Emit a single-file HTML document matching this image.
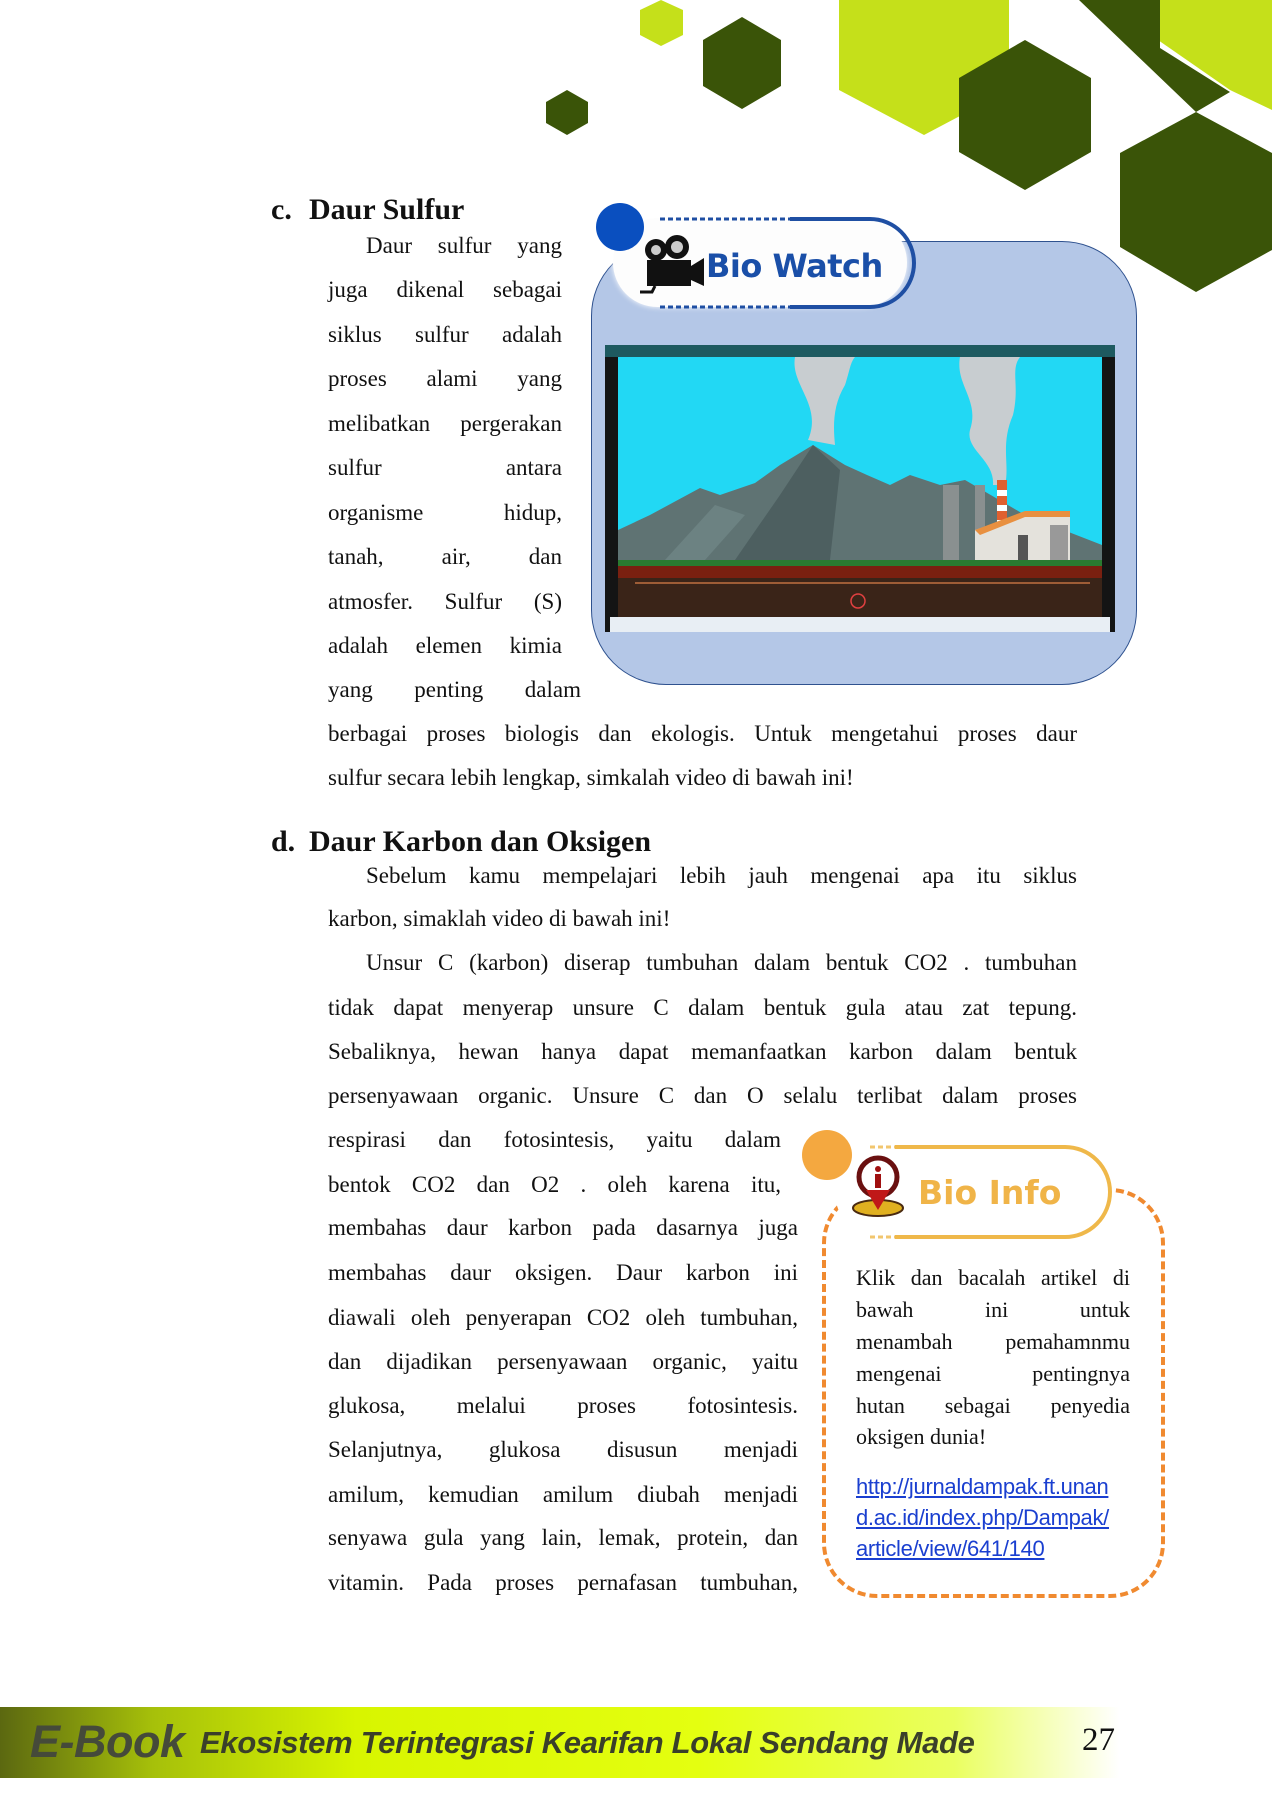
<!DOCTYPE html>
<html><head><meta charset="utf-8">
<style>
*{margin:0;padding:0;box-sizing:border-box}
body{width:1272px;height:1800px;background:#fff;position:relative;overflow:hidden;font-family:"Liberation Serif",serif;color:#111}
.l{position:absolute;font-size:23px;line-height:30px;white-space:nowrap}
.j{text-align:justify;text-align-last:justify;white-space:normal}
.h{position:absolute;font-size:30px;font-weight:bold;line-height:30px}
.i{position:absolute;font-size:22px;line-height:30px}
.lk{position:absolute;font-family:"Liberation Sans",sans-serif;font-size:22px;color:#1a3fd0;text-decoration:underline;line-height:30px;letter-spacing:-0.3px}
</style></head><body>
<svg style="position:absolute;left:0;top:0" width="1272" height="420">
<polygon points="661,0 683,10 683,35 661,46 640,35 640,10" fill="#c5e01a"/>
<polygon points="742,17 781,40 781,86 742,109 703,86 703,40" fill="#3a5408"/>
<polygon points="567,90 588,102 588,123 567,135 546,123 546,102" fill="#3a5408"/>
<polygon points="839,0 1009,0 1009,90 924,135 839,90" fill="#c5e01a"/>
<polygon points="1158,0 1272,0 1272,110 1230,90 1158,40" fill="#c5e01a"/>
<polygon points="1079,0 1160,0 1160,48 1230,92 1196,112" fill="#3a5408"/>
<polygon points="1025,40 1091,78 1091,152 1025,190 959,152 959,78" fill="#3a5408"/>
<polygon points="1196,112 1272,153 1272,250 1196,292 1120,247 1120,153" fill="#3a5408"/>
</svg>

<div class="h" style="left:271px;top:195px">c.</div>
<div class="h" style="left:309px;top:195px">Daur Sulfur</div>
<div class="l" style="left:366px;top:231px;width:196px" ><div class="j">Daur sulfur yang</div></div>
<div class="l j" style="left:328px;top:275px;width:234px">juga dikenal sebagai</div>
<div class="l j" style="left:328px;top:320px;width:234px">siklus sulfur adalah</div>
<div class="l j" style="left:328px;top:364px;width:234px">proses alami yang</div>
<div class="l j" style="left:328px;top:409px;width:234px">melibatkan pergerakan</div>
<div class="l j" style="left:328px;top:453px;width:234px">sulfur antara</div>
<div class="l j" style="left:328px;top:498px;width:234px">organisme hidup,</div>
<div class="l j" style="left:328px;top:542px;width:234px">tanah, air, dan</div>
<div class="l j" style="left:328px;top:587px;width:234px">atmosfer. Sulfur (S)</div>
<div class="l j" style="left:328px;top:631px;width:234px">adalah elemen kimia</div>
<div class="l j" style="left:328px;top:675px;width:253px">yang penting dalam</div>
<div class="l j" style="left:328px;top:719px;width:749px">berbagai proses biologis dan ekologis. Untuk mengetahui proses daur</div>
<div class="l" style="left:328px;top:763px">sulfur secara lebih lengkap, simkalah video di bawah ini!</div>

<!-- Bio Watch -->
<div style="position:absolute;left:591px;top:241px;width:546px;height:444px;background:#b4c7e7;border:1.5px solid #2f528f;border-radius:75px"></div>
<div style="position:absolute;left:613px;top:218px;width:294px;height:89px;background:#fdfdfd;border-radius:45px;box-shadow:0 0 6px #fff"></div>
<svg style="position:absolute;left:590px;top:200px" width="330" height="120">
<path d="M200 19 H280 A44 44 0 0 1 280 107 H200" fill="none" stroke="#1f4fa3" stroke-width="4"/>
<path d="M70 19 H200 M70 107 H200" fill="none" stroke="#1f4fa3" stroke-width="3" stroke-dasharray="5 3"/>
<circle cx="30" cy="27" r="24" fill="#0a4fbf"/>
<circle cx="66" cy="50" r="11" fill="#111"/><circle cx="66" cy="50" r="5" fill="#ccc"/>
<circle cx="87" cy="47" r="12" fill="#111"/><circle cx="87" cy="47" r="6" fill="#ccc"/>
<rect x="57" y="60" width="44" height="26" fill="#111"/>
<polygon points="101,66 114,58 114,86 101,80" fill="#111"/>
<path d="M65 86 L62 92 L50 92" stroke="#111" stroke-width="3" fill="none"/>
</svg>
<div style="position:absolute;left:706px;top:244px;font-family:'DejaVu Sans',sans-serif;font-weight:bold;font-size:32px;color:#1a4fa8;line-height:44px;letter-spacing:-0.5px">Bio Watch</div>

<!-- video -->
<svg style="position:absolute;left:605px;top:345px" width="510" height="287">
<rect width="510" height="287" fill="#141414"/>
<rect x="0" y="0" width="510" height="12" fill="#1e5a60"/>
<rect x="13" y="12" width="484" height="203" fill="#22d8f4"/>
<path d="M190 12 C185 40 218 60 203 95 L230 100 C228 80 228 60 240 40 C245 25 245 18 250 12Z" fill="#c8cdd0"/>
<path d="M355 12 C350 40 375 55 365 85 C360 105 390 115 388 140 L400 140 C405 120 395 100 408 70 C415 40 405 25 415 12Z" fill="#c8cdd0"/>
<polygon points="13,185 45,170 95,143 115,150 150,138 175,120 208,100 240,120 262,130 285,140 305,130 335,140 360,135 420,170 497,200 497,215 13,215" fill="#5f7373"/>
<polygon points="208,100 235,125 225,215 130,215 175,150" fill="#4d5f60"/>
<polygon points="60,215 110,160 140,170 100,215" fill="#6c8282"/>
<rect x="338" y="140" width="16" height="75" fill="#8a9090"/>
<rect x="370" y="140" width="10" height="75" fill="#8a9090"/>
<rect x="392" y="135" width="10" height="80" fill="#e06030"/>
<rect x="392" y="145" width="10" height="6" fill="#fff"/><rect x="392" y="160" width="10" height="6" fill="#fff"/><rect x="392" y="175" width="10" height="6" fill="#fff"/>
<polygon points="370,215 370,185 420,168 465,168 465,215" fill="#e4e2dc"/>
<polygon points="370,185 420,166 465,166 465,172 420,172 375,190" fill="#e89040"/>
<rect x="413" y="190" width="10" height="25" fill="#555"/><rect x="445" y="180" width="18" height="35" fill="#999"/>
<rect x="13" y="215" width="484" height="6" fill="#2a7a30"/>
<rect x="13" y="221" width="484" height="12" fill="#7a2010"/>
<rect x="13" y="233" width="484" height="40" fill="#3a2418"/>
<line x1="30" y1="238" x2="485" y2="238" stroke="#c07040" stroke-width="1.5"/>
<circle cx="253" cy="256" r="7" fill="none" stroke="#e04040" stroke-width="1.5"/>
<rect x="5" y="272" width="500" height="15" fill="#e8eef4"/>
</svg>

<div class="h" style="left:271px;top:827px">d.</div>
<div class="h" style="left:309px;top:827px">Daur Karbon dan Oksigen</div>
<div class="l j" style="left:366px;top:861px;width:711px">Sebelum kamu mempelajari lebih jauh mengenai apa itu siklus</div>
<div class="l" style="left:328px;top:904px">karbon, simaklah video di bawah ini!</div>
<div class="l j" style="left:366px;top:948px;width:711px">Unsur C (karbon) diserap tumbuhan dalam bentuk CO2 . tumbuhan</div>
<div class="l j" style="left:328px;top:993px;width:749px">tidak dapat menyerap unsure C dalam bentuk gula atau zat tepung.</div>
<div class="l j" style="left:328px;top:1037px;width:749px">Sebaliknya, hewan hanya dapat memanfaatkan karbon dalam bentuk</div>
<div class="l j" style="left:328px;top:1081px;width:749px">persenyawaan organic. Unsure C dan O selalu terlibat dalam proses</div>
<div class="l j" style="left:328px;top:1125px;width:453px">respirasi dan fotosintesis, yaitu dalam</div>
<div class="l j" style="left:328px;top:1170px;width:453px">bentok CO2 dan O2 . oleh karena itu,</div>
<div class="l j" style="left:328px;top:1213px;width:470px">membahas daur karbon pada dasarnya juga</div>
<div class="l j" style="left:328px;top:1258px;width:470px">membahas daur oksigen. Daur karbon ini</div>
<div class="l j" style="left:328px;top:1303px;width:470px">diawali oleh penyerapan CO2 oleh tumbuhan,</div>
<div class="l j" style="left:328px;top:1347px;width:470px">dan dijadikan persenyawaan organic, yaitu</div>
<div class="l j" style="left:328px;top:1391px;width:470px">glukosa, melalui proses fotosintesis.</div>
<div class="l j" style="left:328px;top:1435px;width:470px">Selanjutnya, glukosa disusun menjadi</div>
<div class="l j" style="left:328px;top:1480px;width:470px">amilum, kemudian amilum diubah menjadi</div>
<div class="l j" style="left:328px;top:1523px;width:470px">senyawa gula yang lain, lemak, protein, dan</div>
<div class="l j" style="left:328px;top:1568px;width:470px">vitamin. Pada proses pernafasan tumbuhan,</div>

<!-- Bio Info -->
<div style="position:absolute;left:822px;top:1188px;width:343px;height:410px;border:4px dashed #f08a30;border-radius:55px"></div>
<div style="position:absolute;left:835px;top:1147px;width:280px;height:91px;background:#fff;border-radius:46px"></div>
<svg style="position:absolute;left:800px;top:1120px" width="380" height="160">
<path d="M95 27 H265 A45 45 0 0 1 265 117 H95" fill="none" stroke="#efb84a" stroke-width="4"/>
<path d="M70 27 H200 M70 117 H200" fill="none" stroke="#efb84a" stroke-width="3" stroke-dasharray="5 3" opacity="0.8"/>
<circle cx="27" cy="35" r="25" fill="#f4a840"/>
<ellipse cx="78" cy="88" rx="25" ry="8" fill="#e0b020" stroke="#4a2a10" stroke-width="2"/>
<circle cx="78" cy="57" r="19" fill="#fff" stroke="#6a1010" stroke-width="5"/>
<polygon points="66,70 90,70 78,90" fill="#c01818"/>
<circle cx="78" cy="49" r="3" fill="#a01010"/><rect x="75" y="54" width="6" height="14" fill="#a01010"/>
</svg>
<div style="position:absolute;left:918px;top:1171px;font-family:'DejaVu Sans',sans-serif;font-weight:bold;font-size:33px;color:#f0b448;line-height:44px">Bio Info</div>
<div class="i" style="left:856px;top:1263px;width:274px;text-align:justify;text-align-last:justify">Klik dan bacalah artikel di</div>
<div class="i" style="left:856px;top:1295px;width:274px;text-align:justify;text-align-last:justify">bawah ini untuk</div>
<div class="i" style="left:856px;top:1327px;width:274px;text-align:justify;text-align-last:justify">menambah pemahamnmu</div>
<div class="i" style="left:856px;top:1359px;width:274px;text-align:justify;text-align-last:justify">mengenai pentingnya</div>
<div class="i" style="left:856px;top:1391px;width:274px;text-align:justify;text-align-last:justify">hutan sebagai penyedia</div>
<div class="i" style="left:856px;top:1422px">oksigen dunia!</div>
<div class="lk" style="left:856px;top:1472px">http://jurnaldampak.ft.unan</div>
<div class="lk" style="left:856px;top:1503px">d.ac.id/index.php/Dampak/</div>
<div class="lk" style="left:856px;top:1534px">article/view/641/140</div>

<!-- footer -->
<div style="position:absolute;left:0;top:1707px;width:1272px;height:71px;background:linear-gradient(90deg,#5b6810 0%,#a6c00a 12%,#d8f500 28%,#e4ff10 55%,#eaff60 75%,#fff 88%)"></div>
<div style="position:absolute;left:30px;top:1714px;font-family:'Liberation Sans',sans-serif;font-weight:bold;font-style:italic;font-size:45px;color:#454a3a;line-height:56px;letter-spacing:-0.5px">E-Book</div>
<div style="position:absolute;left:200px;top:1721px;font-family:'Liberation Sans',sans-serif;font-weight:bold;font-style:italic;font-size:31px;color:#3a3f2a;line-height:44px;letter-spacing:-0.3px">Ekosistem Terintegrasi Kearifan Lokal Sendang Made</div>
<div style="position:absolute;left:1082px;top:1720px;font-size:33px;line-height:40px">27</div>
</body></html>
